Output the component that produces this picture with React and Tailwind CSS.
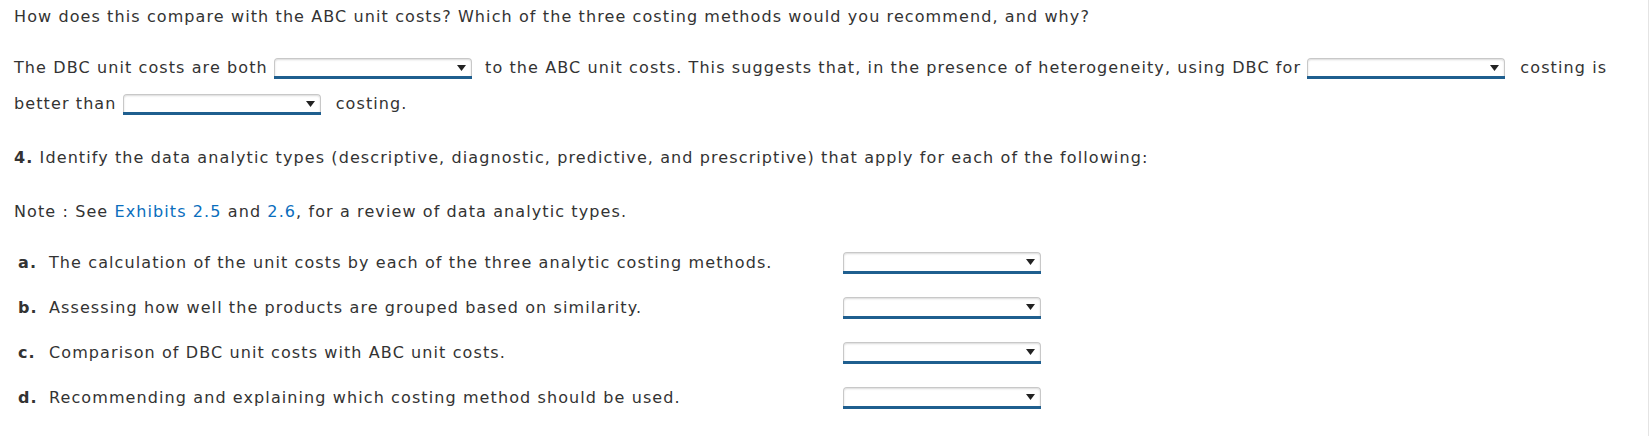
import React from "react";

const Dropdown = ({ height = "h-[21px]" }) => (
  <span
    className={`inline-flex w-[198px] ${height} items-center justify-end align-middle rounded-t-[4px] bg-white border border-b-0 border-[#c8c8c8] shadow-[inset_0_1px_2px_rgba(0,0,0,0.15)] relative pr-[5px]`}
  >
    <span className="absolute left-[-1px] right-[-1px] bottom-0 h-[3px] bg-[#1f5f8f]"></span>
    <svg width="9" height="6" viewBox="0 0 9 6" className="mb-[3px]">
      <path d="M0 0 L9 0 L4.5 6 Z" fill="#222" />
    </svg>
  </span>
);

const items = [
  ["a.", "The calculation of the unit costs by each of the three analytic costing methods."],
  ["b.", "Assessing how well the products are grouped based on similarity."],
  ["c.", "Comparison of DBC unit costs with ABC unit costs."],
  ["d.", "Recommending and explaining which costing method should be used."],
];

export default function App() {
  return (
    <div
      className="w-[1649px] h-[436px] bg-white text-[#333] text-[16px] tracking-[1.1px] border-r border-[#e4e4e4] overflow-hidden"
      style={{ fontFamily: "'DejaVu Sans', Verdana, sans-serif" }}
    >
      <div className="pl-[14px] pt-[6px]">
        <p className="leading-[22px]">
          How does this compare with the ABC unit costs? Which of the three costing methods would you recommend, and why?
        </p>

        <div className="mt-[22px] leading-[36px]">
          The DBC unit costs are both <Dropdown />
          <span className="ml-[13px]">
            to the ABC unit costs. This suggests that, in the presence of heterogeneity, using DBC for
          </span>{" "}
          <Dropdown />
          <span className="ml-[15px]">costing is</span>
          <br />
          better than <Dropdown />
          <span className="ml-[15px]">costing.</span>
        </div>

        <p className="mt-[25px] leading-[22px]">
          <span className="font-bold">4.</span> Identify the data analytic types (descriptive, diagnostic, predictive, and prescriptive) that apply for each of the following:
        </p>

        <p className="mt-[32px] leading-[22px]">
          Note : See <span className="text-[#0a6ebd]">Exhibits 2.5</span> and{" "}
          <span className="text-[#0a6ebd]">2.6</span>, for a review of data analytic types.
        </p>

        <div className="mt-[29px] pl-[4px] flex flex-col gap-[23px]">
          {items.map(([k, t]) => (
            <div key={k} className="flex items-center h-[22px]">
              <span className="font-bold w-[31px]">{k}</span>
              <span className="w-[794px]">{t}</span>
              <Dropdown height="h-[22px]" />
            </div>
          ))}
        </div>
      </div>
    </div>
  );
}
